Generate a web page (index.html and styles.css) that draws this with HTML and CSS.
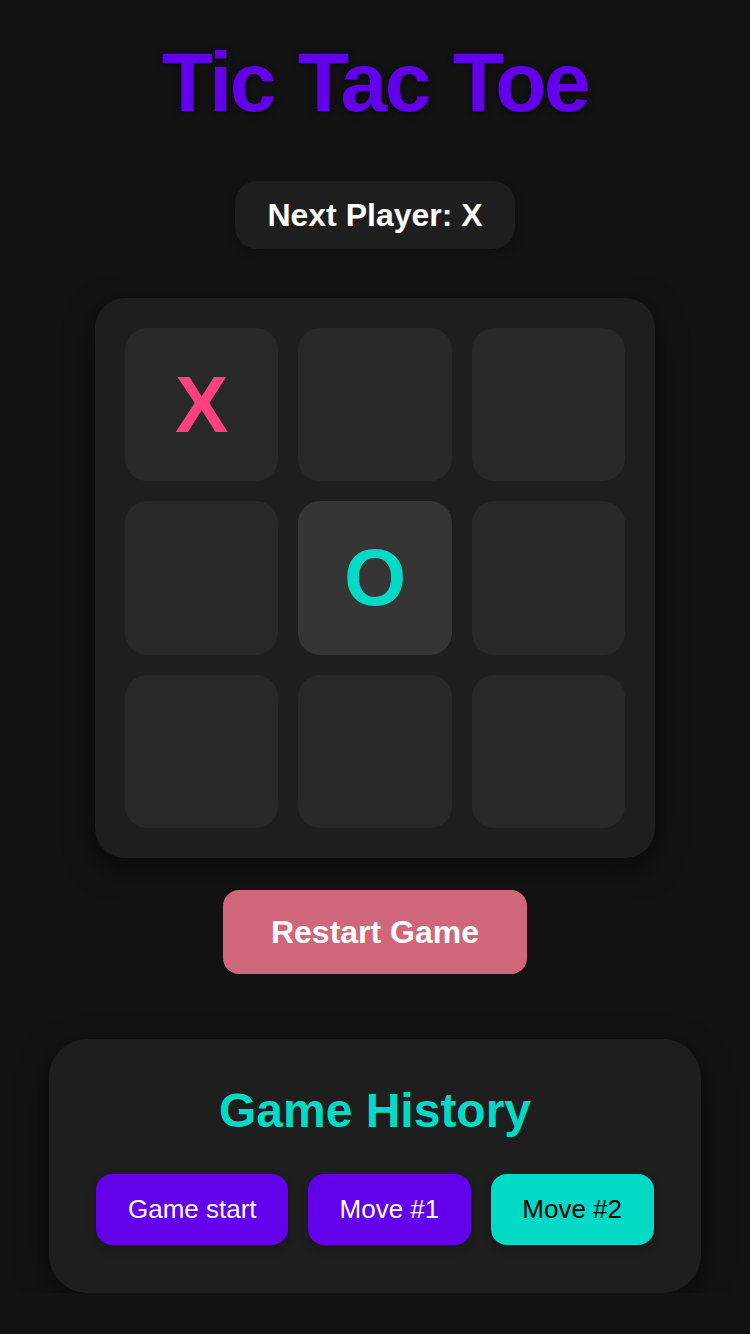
FILE: index.html
```html
<!DOCTYPE html>
<html lang="en">
<head>
<meta charset="utf-8">
<title>Tic Tac Toe</title>
<link rel="stylesheet" href="styles.css">
</head>
<body>
<main class="app">
  <h1 class="title">Tic Tac Toe</h1>
  <div class="status">Next Player: X</div>
  <div class="board">
    <button class="cell cell-x">X</button>
    <button class="cell"></button>
    <button class="cell"></button>
    <button class="cell"></button>
    <button class="cell cell-o cell-last">O</button>
    <button class="cell"></button>
    <button class="cell"></button>
    <button class="cell"></button>
    <button class="cell"></button>
  </div>
  <button class="restart">Restart Game</button>
  <section class="history">
    <h2 class="history-title">Game History</h2>
    <div class="history-list">
      <button class="move">Game start</button>
      <button class="move">Move #1</button>
      <button class="move move-current">Move #2</button>
    </div>
  </section>
</main>
</body>
</html>
```
FILE: styles.css
```css
html, body {
  margin: 0;
  padding: 0;
  background: #121212;
}
body {
  font-family: "Liberation Sans", Arial, Helvetica, sans-serif;
  color: #ffffff;
}
.app {
  display: flex;
  flex-direction: column;
  align-items: center;
  padding-top: 34px;
}
.title {
  margin: 0;
  font-size: 84px;
  font-weight: 700;
  line-height: 96px;
  letter-spacing: -2.5px;
  word-spacing: 3px;
  color: #6200ea;
  text-shadow: 0 2px 6px rgba(0, 0, 0, 0.5);
}
.status {
  margin-top: 51px;
  padding: 16px 32px;
  background: #1e1e1e;
  border-radius: 22px;
  font-size: 32px;
  font-weight: 700;
  line-height: 36px;
  box-shadow: 0 4px 10px rgba(0, 0, 0, 0.25);
}
.board {
  margin-top: 49px;
  width: 560px;
  box-sizing: border-box;
  padding: 30px;
  display: grid;
  grid-template-columns: repeat(3, 1fr);
  grid-auto-rows: 153.33px;
  gap: 20px;
  background: #1e1e1e;
  border-radius: 30px;
  box-shadow: 0 10px 30px rgba(0, 0, 0, 0.5);
}
.cell {
  border: none;
  margin: 0;
  padding: 0;
  background: #282828;
  border-radius: 22px;
  font-family: "Liberation Sans", Arial, Helvetica, sans-serif;
  font-size: 80px;
  font-weight: 700;
  line-height: 1;
  display: flex;
  align-items: center;
  justify-content: center;
}
.cell-last {
  background: #353535;
}
.cell-x {
  color: #ff4081;
}
.cell-o {
  color: #03dac6;
}
.restart {
  margin-top: 32px;
  border: none;
  padding: 24px 48px;
  background: #cf6679;
  color: #ffffff;
  border-radius: 16px;
  font-family: "Liberation Sans", Arial, Helvetica, sans-serif;
  font-size: 32px;
  font-weight: 700;
  line-height: 36px;
}
.history {
  margin-top: 65px;
  width: 652px;
  box-sizing: border-box;
  padding: 44px 40px 48px;
  background: #1e1e1e;
  border-radius: 38px;
  box-shadow: 0 10px 30px rgba(0, 0, 0, 0.5);
  display: flex;
  flex-direction: column;
  align-items: center;
}
.history-title {
  margin: 0;
  font-size: 48px;
  font-weight: 700;
  line-height: 55px;
  color: #03dac6;
}
.history-list {
  margin-top: 36px;
  display: flex;
  justify-content: center;
  gap: 20px;
}
.move {
  flex-shrink: 0;
  white-space: nowrap;
  border: none;
  margin: 0;
  padding: 20px 31.5px;
  background: #6200ea;
  color: #ffffff;
  border-radius: 16px;
  font-family: "Liberation Sans", Arial, Helvetica, sans-serif;
  font-size: 26px;
  font-weight: 400;
  line-height: 31px;
  box-shadow: 0 4px 10px rgba(0, 0, 0, 0.2);
}
.move-current {
  background: #03dac6;
  color: #000000;
}
```
